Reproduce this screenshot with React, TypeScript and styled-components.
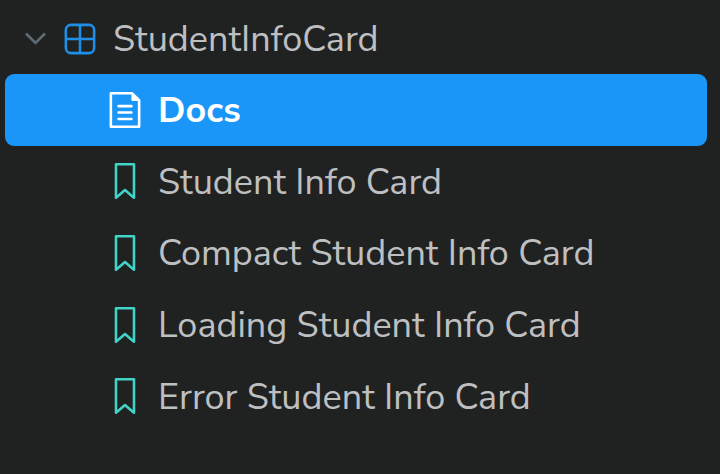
import React, { useState } from "react";
import styled, { createGlobalStyle } from "styled-components";

const GlobalStyle = createGlobalStyle`
  *, *::before, *::after { box-sizing: border-box; }
  body {
    margin: 0;
    background: #202221;
    color: #bebfc1;
    font-family: "Nunito Sans", "Noto Sans", sans-serif;
  }
`;

const Sidebar = styled.nav`
  min-height: 100vh;
  padding: 3px 13px 42px 5px;
`;

const GroupButton = styled.button`
  display: flex;
  align-items: center;
  gap: 15px;
  width: 100%;
  height: 71px;
  padding: 0 0 0 18px;
  border: 0;
  background: transparent;
  color: inherit;
  font: inherit;
  text-align: left;
  cursor: pointer;
`;

const StoryList = styled.ul`
  display: grid;
  grid-auto-rows: 1fr;
  min-height: 358px;
  margin: 0;
  padding: 0;
  list-style: none;
`;

const StoryLink = styled.a<{ $selected: boolean }>`
  display: flex;
  align-items: center;
  gap: 15px;
  height: 100%;
  padding-left: 102px;
  border-radius: 9px;
  background: ${(p) => (p.$selected ? "#1a96f8" : "transparent")};
  color: ${(p) => (p.$selected ? "#ffffff" : "inherit")};
  font-weight: ${(p) => (p.$selected ? 700 : 400)};
  text-decoration: none;
  white-space: nowrap;
`;

const Label = styled.span`
  padding-top: 3px;
  font-size: 36px;
  line-height: 48px;
`;

const Icon = styled.svg<{ $color: string }>`
  flex: none;
  width: 36px;
  height: 36px;
  fill: ${(p) => p.$color};
`;

const Chevron = styled.svg<{ $open: boolean }>`
  flex: none;
  width: 24px;
  height: 24px;
  fill: none;
  stroke: #5f6b74;
  stroke-width: 2.6;
  transform: ${(p) => (p.$open ? "none" : "rotate(-90deg)")};
`;

const ComponentIcon = () => (
  <Icon $color="#1e8ee9" viewBox="0 0 14 14" aria-hidden="true">
    <path
      fillRule="evenodd"
      d="M3.5 1.004a2.5 2.5 0 00-2.5 2.5v7a2.5 2.5 0 002.5 2.5h7a2.5 2.5 0 002.5-2.5v-7a2.5 2.5 0 00-2.5-2.5h-7zm8.5 5.5H7.5v-4.5h3a1.5 1.5 0 011.5 1.5v3zm0 1v3a1.5 1.5 0 01-1.5 1.5h-3v-4.5H12zm-5.5 4.5v-4.5H2v3a1.5 1.5 0 001.5 1.5h3zM2 6.504h4.5v-4.5h-3a1.5 1.5 0 00-1.5 1.5v3z"
    />
  </Icon>
);

const DocumentIcon = () => (
  <Icon $color="#ffffff" viewBox="0 0 14 14" aria-hidden="true">
    <path d="M4 5.5a.5.5 0 01.5-.5h5a.5.5 0 010 1h-5a.5.5 0 01-.5-.5zM4.5 7.5a.5.5 0 000 1h5a.5.5 0 000-1h-5zM4 10.5a.5.5 0 01.5-.5h5a.5.5 0 010 1h-5a.5.5 0 01-.5-.5z" />
    <path
      fillRule="evenodd"
      d="M1.5 0a.5.5 0 00-.5.5v13a.5.5 0 00.5.5h11a.5.5 0 00.5-.5V3.207a.5.5 0 00-.146-.353L10.146.146A.5.5 0 009.793 0H1.5zM2 1h7.5v2a.5.5 0 00.5.5h2V13H2V1z"
    />
  </Icon>
);

const BookmarkIcon = () => (
  <Icon $color="#42d3c7" viewBox="0 0 14 14" aria-hidden="true">
    <path
      fillRule="evenodd"
      d="M3.5 0h7a.5.5 0 01.5.5v13a.5.5 0 01-.454.498.462.462 0 01-.371-.118L7 11.159l-3.175 2.72a.46.46 0 01-.379.118A.5.5 0 013 13.5V.5a.5.5 0 01.5-.5zM4 12.413l2.664-2.284a.454.454 0 01.377-.128.498.498 0 01.284.12L10 12.412V1H4v11.413z"
    />
  </Icon>
);

const entries = [
  { id: "docs", label: "Docs", docs: true },
  { id: "default", label: "Student Info Card", docs: false },
  { id: "compact", label: "Compact Student Info Card", docs: false },
  { id: "loading", label: "Loading Student Info Card", docs: false },
  { id: "error", label: "Error Student Info Card", docs: false },
];

export default function App() {
  const [open, setOpen] = useState(true);
  const [selected, setSelected] = useState("docs");

  return (
    <>
      <GlobalStyle />
      <Sidebar aria-label="Stories">
        <GroupButton type="button" aria-expanded={open} onClick={() => setOpen(!open)}>
          <Chevron $open={open} viewBox="0 0 24 24" aria-hidden="true">
            <path d="M3 6.5l9.500 9.500 9.500-9.500" />
          </Chevron>
          <ComponentIcon />
          <Label>StudentInfoCard</Label>
        </GroupButton>
        {open && (
          <StoryList>
            {entries.map((entry) => (
              <li key={entry.id}>
                <StoryLink
                  href={`#${entry.id}`}
                  $selected={entry.id === selected}
                  aria-current={entry.id === selected ? "page" : undefined}
                  onClick={() => setSelected(entry.id)}
                >
                  {entry.docs ? <DocumentIcon /> : <BookmarkIcon />}
                  <Label>{entry.label}</Label>
                </StoryLink>
              </li>
            ))}
          </StoryList>
        )}
      </Sidebar>
    </>
  );
}
